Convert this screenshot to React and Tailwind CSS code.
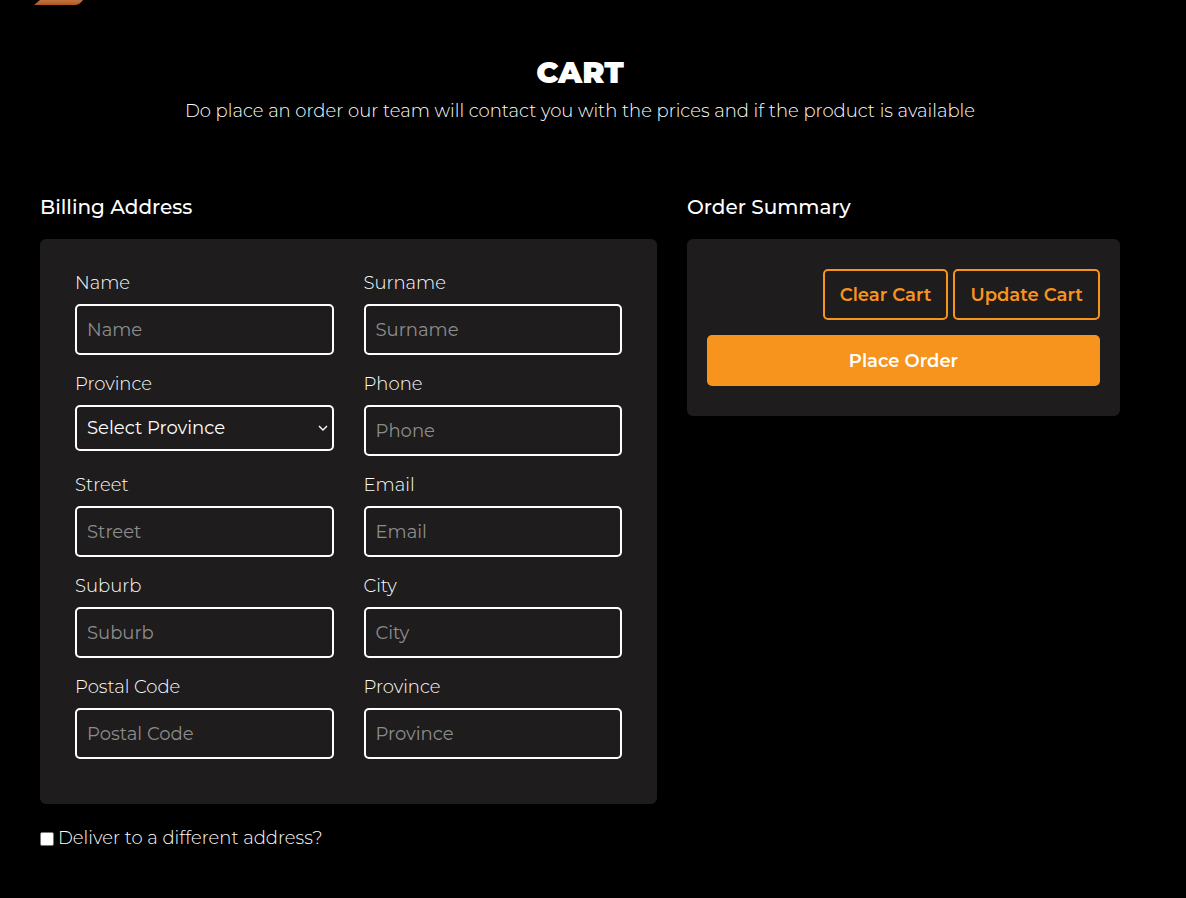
const fields = [
  { id: "name", label: "Name" },
  { id: "surname", label: "Surname" },
  { id: "province-select", label: "Province", select: true },
  { id: "phone", label: "Phone", type: "tel" },
  { id: "street", label: "Street" },
  { id: "email", label: "Email", type: "email" },
  { id: "suburb", label: "Suburb" },
  { id: "city", label: "City" },
  { id: "postal-code", label: "Postal Code" },
  { id: "province", label: "Province" },
];

function Logo() {
  return (
    <svg width="52" height="5" viewBox="0 0 52 5" className="block" aria-hidden="true">
      <defs>
        <linearGradient id="logo-shade" x1="0" y1="0" x2="0" y2="1">
          <stop offset="0" stopColor="#bd7440" />
          <stop offset="0.6" stopColor="#b9652f" />
          <stop offset="1" stopColor="#b4511d" />
        </linearGradient>
      </defs>
      <path d="M6 0H49C47 3 44 5 41 5H0Z" fill="url(#logo-shade)" />
    </svg>
  );
}

function Field({ field }) {
  return (
    <div className="min-w-0">
      <label htmlFor={field.id} className="mb-1.5 block text-lg leading-[29px] font-light">
        {field.label}
      </label>
      {field.select ? (
        <div className="grid items-center">
          <select
            id={field.id}
            defaultValue=""
            className="col-start-1 row-start-1 h-[46px] w-full appearance-none rounded-[5px] border-2 border-white bg-[#1e1c1d] px-[10px] text-lg text-white"
          >
            <option value="">Select Province</option>
          </select>
          <svg
            width="10"
            height="6"
            viewBox="0 0 10 6"
            className="pointer-events-none col-start-1 row-start-1 mr-1.5 justify-self-end"
            fill="none"
            stroke="white"
            strokeWidth="1.4"
            aria-hidden="true"
          >
            <path d="M1 1L5 5L9 1" />
          </svg>
        </div>
      ) : (
        <input
          id={field.id}
          type={field.type || "text"}
          placeholder={field.label}
          className="block h-[51px] w-full rounded-[5px] border-2 border-white bg-transparent px-[10px] text-lg text-white placeholder:text-[#8c8c8c]"
        />
      )}
    </div>
  );
}

export default function App() {
  return (
    <div className="min-h-screen bg-black pr-[66px] pb-10 pl-10 font-['Montserrat','Inter',sans-serif] text-white">
      <header className="-ml-1.5">
        <Logo />
      </header>
      <main>
        <div className="pt-[47px] text-center">
          <h1 className="text-[30px] leading-[42px] font-black">CART</h1>
          <p className="mt-1 text-lg leading-[27px] font-light">
            Do place an order our team will contact you with the prices and if the product is available
          </p>
        </div>
        <div className="mt-[67px] grid grid-cols-[617fr_433fr] items-start gap-[30px]">
          <section>
            <h2 className="text-xl leading-[30px] font-medium">Billing Address</h2>
            <div className="mt-[17px] grid grid-cols-2 gap-x-[30px] gap-y-[15px] rounded-md bg-[#1e1c1d] px-[35px] pt-[30px] pb-[45px]">
              {fields.map((field) => (
                <Field key={field.id} field={field} />
              ))}
            </div>
            <label className="mt-5 flex items-center gap-1 text-lg leading-[29px] font-light">
              <input type="checkbox" className="size-[14px] appearance-none rounded-xs border border-[#767676] bg-white checked:bg-[#f7941e]" />
              Deliver to a different address?
            </label>
          </section>
          <section>
            <h2 className="text-xl leading-[30px] font-medium">Order Summary</h2>
            <div className="mt-[17px] rounded-md bg-[#1e1c1d] px-5 py-[30px] text-lg font-semibold">
              <div className="flex justify-end gap-[5px]">
                <button type="button" className="h-[51px] rounded-[5px] border-2 border-[#f7941e] px-[15px] text-[#f7941e]">
                  Clear Cart
                </button>
                <button type="button" className="h-[51px] rounded-[5px] border-2 border-[#f7941e] px-[15px] text-[#f7941e]">
                  Update Cart
                </button>
              </div>
              <button type="button" className="mt-[15px] h-[51px] w-full rounded-[5px] bg-[#f7941e]">
                Place Order
              </button>
            </div>
          </section>
        </div>
      </main>
    </div>
  );
}
